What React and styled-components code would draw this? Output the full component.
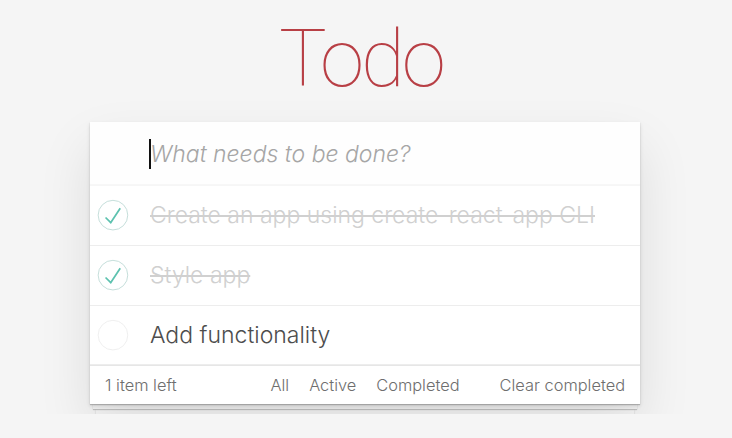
import React from 'react';
import styled, { createGlobalStyle } from 'styled-components';

const GlobalStyle = createGlobalStyle`
    html, body {
        margin: 0;
        padding: 0;
    }
    body {
        background: #f5f5f5;
        color: #4d4d4d;
        font: 14px 'Inter', 'Helvetica Neue', Arial, sans-serif;
        font-weight: 300;
        line-height: 1.4em;
        -webkit-font-smoothing: antialiased;
    }
`;

const Page = styled.div`
    width: 550px;
    padding-right: 2px;
    margin: 0 auto;
`;

const Title = styled.h1`
    margin: 0 0 23px;
    padding: 19px 8px 0 0;
    font-family: 'Roboto', sans-serif;
    font-size: 80px;
    line-height: 80px;
    font-weight: 100;
    letter-spacing: -3px;
    text-align: center;
    color: #b83f45;
`;

const Card = styled.section`
    position: relative;
    z-index: 3;
    background: #fff;
    box-shadow: 0 1px 1px rgba(0, 0, 0, 0.2), 0 2px 4px 0 rgba(0, 0, 0, 0.12), 0 25px 50px 0 rgba(0, 0, 0, 0.1);
`;

// the two paper sheets peeking out under the card
const Sheet = styled.div`
    position: relative;
    z-index: ${p => p.$layer};
    height: 5px;
    margin: 0 ${p => p.$inset}px;
    background: #f6f6f6;
    box-shadow: 0 1px ${p => p.$blur}px rgba(0, 0, 0, 0.2);
`;

const InputWrap = styled.div`
    position: relative;
`;

const NewTodo = styled.input`
    display: block;
    width: 100%;
    box-sizing: border-box;
    margin: 0;
    border: none;
    outline: none;
    padding: 16px 16px 16px 60px;
    font-family: inherit;
    font-size: 23px;
    font-weight: 300;
    line-height: 32px;
    color: inherit;
    background: rgba(0, 0, 0, 0.003);
    box-shadow: inset 0 -2px 1px rgba(0, 0, 0, 0.03);
    &::placeholder {
        font-style: italic;
        font-weight: 300;
        color: #a6a6a6;
    }
`;

const Caret = styled.span`
    position: absolute;
    left: 59px;
    top: 17px;
    width: 2px;
    height: 30px;
    background: #111;
`;

const List = styled.ul`
    margin: 0;
    padding: 0;
    list-style: none;
`;

const Item = styled.li`
    display: flex;
    align-items: center;
    font-size: 23px;
    border-bottom: 1px solid #ededed;
`;

const Toggle = styled.svg`
    flex: none;
    width: 40px;
    height: 40px;
`;

const Label = styled.label`
    flex: 1;
    padding: 15px 15px 15px 20px;
    line-height: 28.8px;
    word-break: break-all;
    color: ${p => (p.$done ? '#d0d0d0' : '#4d4d4d')};
    text-decoration: ${p => (p.$done ? 'line-through' : 'none')};
`;

const Footer = styled.footer`
    display: grid;
    grid-template-columns: 1fr auto 1fr;
    align-items: center;
    height: 18px;
    padding: 10px 15px;
    font-size: 16.4px;
    color: #6e6e6e;
    border-top: 1px solid #e6e6e6;
`;

const Count = styled.span`
    justify-self: start;
`;

const Filters = styled.ul`
    display: flex;
    margin: 0;
    padding: 0;
    list-style: none;
`;

const Filter = styled.a`
    margin: 3px 2px;
    padding: 3px 7px;
    color: inherit;
    text-decoration: none;
    border: 1px solid transparent;
    border-radius: 3px;
`;

const Clear = styled.button`
    justify-self: end;
    margin: 0;
    padding: 0;
    border: none;
    background: none;
    font: inherit;
    font-weight: 300;
    color: inherit;
    cursor: pointer;
`;

const CheckIcon = ({ done }) => (
    <Toggle viewBox="-10 -18 100 135">
        <circle cx="50" cy="50" r="50" fill="none" stroke={done ? '#bddad5' : '#ededed'} strokeWidth="3" />
        {done && <path fill="#5dc2af" d="M72 25L42 71 27 56l-4 4 20 20 34-52z" />}
    </Toggle>
);

const todos = [
    { text: 'Create an app using create-react-app CLI', done: true },
    { text: 'Style app', done: true },
    { text: 'Add functionality', done: false },
];

export default function App() {
    return (
        <React.Fragment>
            <GlobalStyle />
            <Page>
                <Title>Todo</Title>
                <Card>
                    <InputWrap>
                        <NewTodo placeholder="What needs to be done?" />
                        <Caret />
                    </InputWrap>
                    <List>
                        {todos.map(t => (
                            <Item key={t.text}>
                                <CheckIcon done={t.done} />
                                <Label $done={t.done}>{t.text}</Label>
                            </Item>
                        ))}
                    </List>
                    <Footer>
                        <Count>1 item left</Count>
                        <Filters>
                            <li><Filter href="#/">All</Filter></li>
                            <li><Filter href="#/active">Active</Filter></li>
                            <li><Filter href="#/completed">Completed</Filter></li>
                        </Filters>
                        <Clear>Clear completed</Clear>
                    </Footer>
                </Card>
                <Sheet $inset={3} $layer={2} $blur={1} />
                <Sheet $inset={6} $layer={1} $blur={2} />
            </Page>
        </React.Fragment>
    );
}
